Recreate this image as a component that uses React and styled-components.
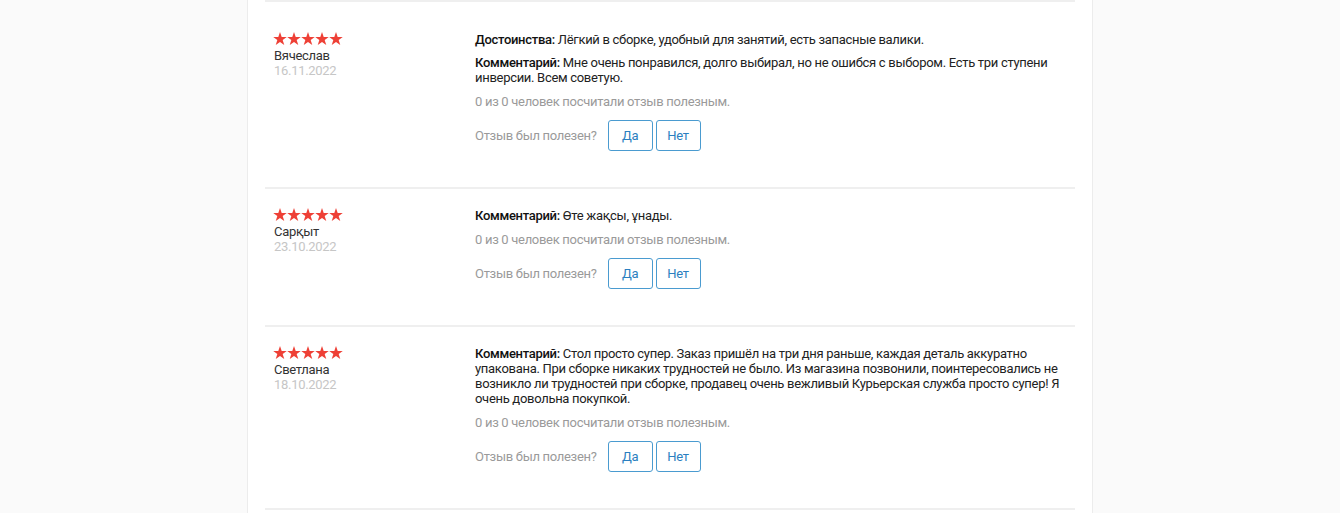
import React from 'react'
import styled, { createGlobalStyle } from 'styled-components'

const GlobalStyle = createGlobalStyle`
  html, body {
    margin: 0;
    padding: 0;
    background: #fafafa;
    font-family: Roboto, 'Liberation Sans', Arial, sans-serif;
  }
`

const reviews = [
  {
    name: 'Вячеслав',
    date: '16.11.2022',
    pros: 'Лёгкий в сборке, удобный для занятий, есть запасные валики.',
    comment: 'Мне очень понравился, долго выбирал, но не ошибся с выбором. Есть три ступени инверсии. Всем советую.',
  },
  {
    name: 'Сарқыт',
    date: '23.10.2022',
    comment: 'Өте жақсы, ұнады.',
  },
  {
    name: 'Светлана',
    date: '18.10.2022',
    comment:
      'Стол просто супер. Заказ пришёл на три дня раньше, каждая деталь аккуратно упакована. При сборке никаких трудностей не было. Из магазина позвонили, поинтересовались не возникло ли трудностей при сборке, продавец очень вежливый Курьерская служба просто супер! Я очень довольна покупкой.',
  },
]

const Star = () => (
  <svg width="14" height="13.5" viewBox="0 0 24 23">
    <polygon
      fill="#ee4036"
      points="12,0 14.9,8.3 23.6,8.3 16.6,13.5 19.3,22.4 12,17 4.7,22.4 7.4,13.5 0.4,8.3 9.1,8.3"
    />
  </svg>
)

const Review = ({ name, date, pros, comment }) => (
  <Row>
    <Author>
      <Stars>
        {[0, 1, 2, 3, 4].map((i) => (
          <Star key={i} />
        ))}
      </Stars>
      <Name>{name}</Name>
      <Date>{date}</Date>
    </Author>
    <Body>
      {pros && (
        <Text>
          <Label>Достоинства:</Label> {pros}
        </Text>
      )}
      <Text>
        <Label>Комментарий:</Label> {comment}
      </Text>
      <Helpful>0 из 0 человек посчитали отзыв полезным.</Helpful>
      <Vote>
        <VoteLabel>Отзыв был полезен?</VoteLabel>
        <VoteButton>Да</VoteButton>
        <VoteButton>Нет</VoteButton>
      </Vote>
    </Body>
  </Row>
)

export default function App() {
  return (
    <>
      <GlobalStyle />
      <Page>
        <Container>
          <TopBar />
          {reviews.map((r) => (
            <Review key={r.name} {...r} />
          ))}
        </Container>
      </Page>
    </>
  )
}

const Page = styled.div`
  display: flex;
  justify-content: center;
  min-height: 513px;
`

const Container = styled.div`
  width: 810px;
  padding: 0 17px;
  background: #fff;
  border-left: 1px solid #ececec;
  border-right: 1px solid #ececec;
`

const TopBar = styled.div`
  height: 2px;
  background: #efefef;
  margin-bottom: 11px;
`

const Row = styled.div`
  display: flex;
  padding: 19px 0 36px 8px;
  border-bottom: 2px solid #efefef;
  letter-spacing: -0.3px;
`

const Author = styled.div`
  width: 201px;
  flex-shrink: 0;
  padding-left: 1px;
`

const Stars = styled.div`
  display: flex;
  height: 13px;
  margin: 0 0 3px -1px;

  svg {
    display: block;
  }
`

const Name = styled.div`
  font-size: 13px;
  line-height: 15px;
  color: #333;
`

const Date = styled.div`
  font-size: 13px;
  line-height: 15px;
  color: #c6c6c6;
`

const Body = styled.div`
  flex: 1;
  padding-right: 10px;
`

const Text = styled.p`
  margin: 0 0 8px;
  font-size: 13px;
  line-height: 15px;
  color: #222;
`

const Label = styled.span`
  font-weight: 500;
  color: #111;
`

const Helpful = styled.p`
  margin: 9px 0 11px;
  font-size: 13px;
  line-height: 15px;
  color: #9a9a9a;
`

const Vote = styled.div`
  display: flex;
  align-items: center;
  margin-top: 11px;
`

const VoteLabel = styled.span`
  font-size: 13px;
  color: #9a9a9a;
  margin-right: 11px;
`

const VoteButton = styled.button`
  width: 45px;
  height: 31px;
  margin-right: 3px;
  padding: 0;
  background: #fff;
  border: 1px solid #4a9bd0;
  border-radius: 3px;
  color: #2b7fc0;
  font-family: Roboto, 'Liberation Sans', Arial, sans-serif;
  font-size: 13px;
  letter-spacing: -0.3px;
  cursor: pointer;
`
